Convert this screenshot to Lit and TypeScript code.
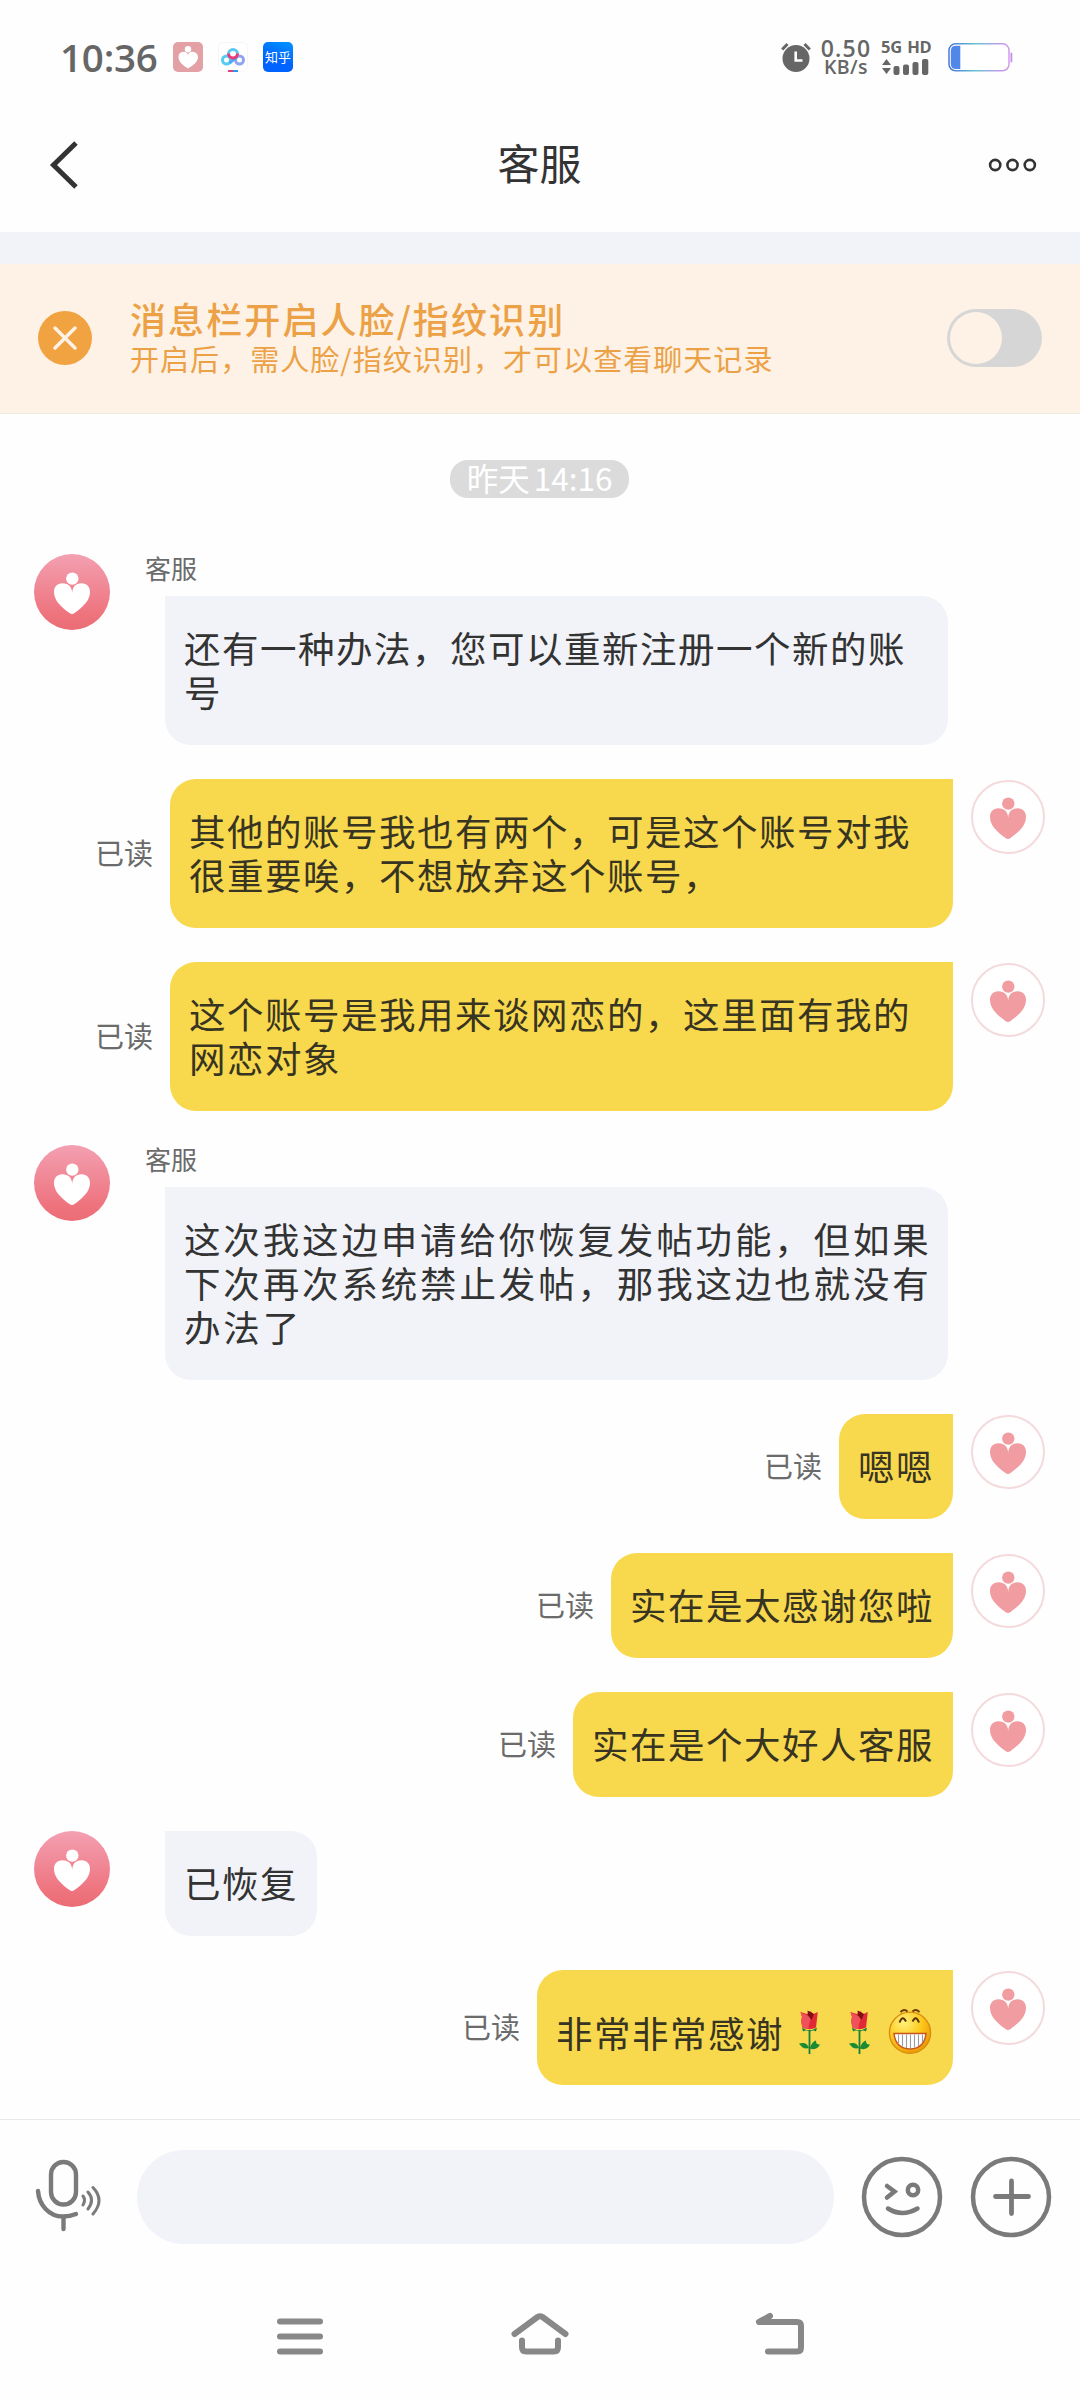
import { LitElement, html, css, svg } from "lit";
import { customElement, property } from "lit/decorators.js";
import { classMap } from "lit/directives/class-map.js";

type Message = {
  side: "in" | "out";
  name?: string;
  text: string;
  long?: boolean;
  spread?: boolean;
  emojis?: ("rose" | "grin")[];
};

const MESSAGES: Message[] = [
  { side: "in", name: "客服", long: true, text: "还有一种办法，您可以重新注册一个新的账号" },
  { side: "out", long: true, text: "其他的账号我也有两个，可是这个账号对我很重要唉，不想放弃这个账号，" },
  { side: "out", long: true, text: "这个账号是我用来谈网恋的，这里面有我的网恋对象" },
  {
    side: "in",
    name: "客服",
    long: true,
    spread: true,
    text: "这次我这边申请给你恢复发帖功能，但如果下次再次系统禁止发帖，那我这边也就没有办法了",
  },
  { side: "out", text: "嗯嗯" },
  { side: "out", text: "实在是太感谢您啦" },
  { side: "out", text: "实在是个大好人客服" },
  { side: "in", text: "已恢复" },
  { side: "out", text: "非常非常感谢", emojis: ["rose", "rose", "grin"] },
];

const heart = (fill: string) => svg`
  <circle cx="38.300" cy="24.600" r="6.200" fill=${fill}/>
  <path fill=${fill} d="M38.200 39C38 33 34.500 29.300 28.500 29.300C23 29.300 20 32.800 20 38C20 47 28 53.500 35.500 59Q38 61 40.500 59C48 53.500 56 47 56 38C56 32.800 53 29.300 47.500 29.300C41.800 29.300 38.400 33 38.200 39Z"/>`;

const rose = html`<svg class="emoji" width="50" height="48" viewBox="0 0 50 48">
  <path d="M25.500 22V46" stroke="#15803a" stroke-width="1.800" fill="none"/>
  <path d="M25 40C22.500 34 19 35 15 35.500C17.500 39.500 21 41.500 25 40ZM26 40.500C27 35.500 30 33 32 32.500C32 35.500 33 36.500 36 36.500C34 41 30 42 26 40.500Z" fill="#1a8a33"/>
  <path d="M18 19.500Q25 25 33 19.500L32 23.500Q29.500 21.500 26 23.500Q21.500 21.500 19 23.500Z" fill="#16803a"/>
  <path d="M16.500 4L23 6L26 3L29.500 6L33.800 4L32 19.500Q25.500 23 18.500 19.500Q16.500 13 18 9Z" fill="#e02a34"/>
  <path d="M16.500 4L24 8L29.500 7Q25 12 24.500 20.800Q21 21 18.500 19.500Q16.500 13 18 9Z" fill="#f0505a"/>
  <path d="M23.500 2.500L30 6L27.500 12L24 7.500Z" fill="#7e1016"/>
</svg>`;

const grin = html`<svg class="emoji" width="50" height="48" viewBox="0 0 50 48">
  <defs><radialGradient id="g" cx=".35" cy=".25" r=".8"><stop offset="0" stop-color="#fff27a"/><stop offset=".55" stop-color="#fdc81c"/><stop offset="1" stop-color="#e99605"/></radialGradient></defs>
  <circle cx="26" cy="24.800" r="20.600" fill="url(#g)" stroke="#d98b10" stroke-width="1.300"/>
  <path d="M16.500 4.200Q20 .200 23.500 3.500M28.500 3.500Q32 .200 35.500 4.200" stroke="#6b3b09" stroke-width="2" fill="none"/>
  <path d="M15.500 14.500Q18.500 6.500 22 13.500M28.500 13.500Q32 6.500 35 14.500" stroke="#5a3208" stroke-width="2" fill="none"/>
  <path d="M10 25.500H42Q40.500 40.500 26 41Q11.500 40.500 10 25.500Z" fill="#fff" stroke="#c8541c" stroke-width="1.500"/>
  <path d="M14.500 26.500V35M18.500 26.500V38.500M22.500 26.500V40M26.500 26.500V40.500M30.500 26.500V39.500M34.500 26.500V38M38.500 26.500V34" stroke="#9b9b9b" stroke-width="1.100"/>
</svg>`;

@customElement("chat-avatar")
class ChatAvatar extends LitElement {
  @property() kind = "in";
  static styles = css`
    :host { display: block; flex: none; width: 76px; height: 76px; }
    svg { display: block; }
  `;
  render() {
    return this.kind === "in"
      ? html`<svg width="76" height="76" viewBox="0 0 76 76">
          <defs><linearGradient id="a" x1="0" y1="0" x2="0" y2="1"><stop offset="0" stop-color="#f3a0b2"/><stop offset=".8" stop-color="#ee737d"/><stop offset="1" stop-color="#eb6c75"/></linearGradient></defs>
          <circle cx="38" cy="38" r="38" fill="url(#a)"/>${heart("#fff")}
        </svg>`
      : html`<svg width="76" height="76" viewBox="0 0 76 76">
          <circle cx="38" cy="38" r="36" fill="#fff" stroke="#f4dadc" stroke-width="2"/>
          ${heart("#f09ca1")}
        </svg>`;
  }
}

@customElement("chat-message")
class ChatMessage extends LitElement {
  @property({ attribute: false }) msg!: Message;
  static styles = css`
    :host { display: block; }
    .row { display: flex; align-items: flex-start; }
    .out { justify-content: flex-end; padding-right: 34px; }
    .in { padding-left: 34px; }
    .body { display: flex; flex-direction: column; align-items: flex-start; padding-left: 55px; }
    .name { font-size: 26px; line-height: 28px; height: 42px; color: #6b6b6b; margin-left: -20px; }
    .bubble { box-sizing: border-box; display: flex; align-items: center; padding: 30px 19px 31px; font-size: 36.500px; line-height: 44px; letter-spacing: 1.500px; white-space: nowrap; }
    .in .bubble { background: #f2f3f9; color: #333; border-radius: 0 26px 26px 26px; }
    .out .bubble { background: #f8d94e; color: #383422; border-radius: 26px 0 26px 26px; }
    .bubble.long { width: 783px; white-space: normal; }
    .bubble.spread { letter-spacing: 2.850px; padding-right: 8px; }
    .bubble.with-emoji { height: 115px; padding: 0 19px; }
    .with-emoji .words { padding-top: 10px; }
    .emoji { display: block; margin-top: 8px; }
    .read { align-self: center; margin-right: 17px; font-size: 29px; letter-spacing: 0; line-height: 34px; padding-bottom: 3px; color: #6b6b6b; }
    .gap { width: 17px; }
  `;
  render() {
    const m = this.msg;
    const bubble = html`<div class=${classMap({
      bubble: true,
      long: !!m.long,
      spread: !!m.spread,
      "with-emoji": !!m.emojis,
    })}><span class="words">${m.text}</span>${(m.emojis ?? []).map((e) => (e === "rose" ? rose : grin))}</div>`;
    return m.side === "in"
      ? html`<div class="row in">
          <chat-avatar kind="in"></chat-avatar>
          <div class="body">${m.name ? html`<div class="name">${m.name}</div>` : ""}${bubble}</div>
        </div>`
      : html`<div class="row out">
          <span class="read">已读</span>${bubble}<span class="gap"></span>
          <chat-avatar kind="out"></chat-avatar>
        </div>`;
  }
}

@customElement("app-root")
class AppRoot extends LitElement {
  static styles = css`
    :host { display: flex; flex-direction: column; width: 1080px; height: 2400px; background: #fefefe; overflow: hidden; font-family: "Noto Sans CJK SC", "Noto Sans", sans-serif; }
    svg { display: block; flex: none; }
    .status { display: flex; align-items: center; justify-content: space-between; height: 76px; padding: 38px 67px 0 60px; box-sizing: border-box; }
    .status-left, .status-right { display: flex; align-items: center; height: 38px; }
    .clock { width: 113px; font: 600 38.500px/38px "Open Sans", sans-serif; letter-spacing: -0.200px; color: #666; }
    .app { width: 30px; height: 30px; margin-right: 15px; border-radius: 5px; overflow: hidden; }
    .zhihu { display: flex; align-items: center; justify-content: center; background: linear-gradient(200deg, #0095ff, #0062ff 60%); color: #fff; font-size: 13px; line-height: 28px; font-weight: 400; }
    .speed { width: 54px; margin: 0 8px 0 8px; display: flex; flex-direction: column; align-items: center; color: #666; font-family: "Open Sans", sans-serif; font-weight: 600; }
    .rate { font-size: 23px; line-height: 19px; letter-spacing: 1.200px; }
    .unit { font-size: 19.500px; line-height: 18px; letter-spacing: 0.400px; }
    .net { width: 50px; display: flex; flex-direction: column; gap: 4px; }
    .net-label { font: 700 16.500px/13px "Open Sans", sans-serif; color: #666; white-space: nowrap; letter-spacing: -0.300px; word-spacing: 1.500px; }
    .battery { margin-left: 17px; }
    header { display: flex; align-items: center; justify-content: space-between; height: 156px; padding: 0 43px 0 49px; box-sizing: border-box; }
    .title { font-size: 42px; line-height: 50px; color: #333; margin-left: 11px; margin-top: 15px; }
    header svg { margin-top: 21px; }
    .band { height: 32px; background: #f2f3f9; }
    .banner { display: flex; align-items: center; height: 150px; box-sizing: border-box; padding: 0 38px 1px; background: #fdf2e5; border-bottom: 1px solid #ececdf; color: #eca146; }
    .texts { flex: 1; padding-left: 38px; margin-top: -2px; }
    .t1 { font-size: 36px; font-weight: 500; line-height: 40px; letter-spacing: 2.100px; }
    .t2 { font-size: 29px; line-height: 36px; letter-spacing: 1.050px; margin-top: 2px; }
    .toggle { width: 95px; height: 58px; border-radius: 29px; background: #d6d6d6; box-sizing: border-box; padding: 3px; }
    .knob { width: 52px; height: 52px; border-radius: 50%; background: #fdf2e5; }
    .when { align-self: center; margin: 46px 1px 0 0; width: 179px; height: 38px; border-radius: 18px; background: #dbdbdb; color: #fff; font-size: 31.500px; line-height: 35px; text-align: center; white-space: nowrap; word-spacing: -3px; }
    .list { display: flex; flex-direction: column; gap: 34px; padding-top: 56px; height: 1621px; box-sizing: border-box; }
    .composer { display: flex; align-items: center; height: 155px; border-top: 1px solid #e9e9e9; box-sizing: border-box; padding-left: 33px; }
    .field { width: 697px; height: 94px; border-radius: 47px; background: #f2f3f9; margin: 0 26px 0 32px; }
    .plus { margin-left: 25px; }
    .nav { display: flex; justify-content: center; padding-top: 33px; gap: 186px; }
  `;

  render() {
    return html`
      <div class="status">
        <div class="status-left">
          <span class="clock">10:36</span>
          <svg class="app" viewBox="0 0 30 30"><rect width="30" height="30" fill="#e3a0a5"/><circle cx="15" cy="7.200" r="3.200" fill="#fff"/><path fill="#fff" d="M15 13Q14 9.800 10.500 9.800Q5.500 10 5.500 15C5.500 20 10 23.500 15 26.500C20 23.500 25 20 25 15Q24.500 10 19.500 9.800Q16 9.800 15 13Z"/></svg>
          <svg class="app" viewBox="0 0 30 30">
            <rect x=".5" y=".5" width="29" height="29" rx="5" fill="#fff" stroke="#f5f5f5"/>
            <g fill="none" stroke-width="3"><circle cx="8.500" cy="18" r="4" stroke="#55cdf2"/><circle cx="21.500" cy="18" r="4" stroke="#8fa3ee"/><path d="M11.500 21L18.500 15" stroke="#4fa8f0"/><path d="M10.500 12A4.500 4.500 0 0 1 19.500 12" stroke="#5cc8ee"/><path d="M10.500 11.500A4.500 4.500 0 0 0 19.500 11.500" stroke="#ea3a78"/></g>
            <path d="M10 28h5v2h-5z" fill="#ea3a78"/><path d="M15 28h5v2h-5z" fill="#2b95ee"/>
          </svg>
          <span class="app zhihu">知乎</span>
        </div>
        <div class="status-right">
          <svg width="30" height="30" viewBox="0 0 30 30"><circle cx="15" cy="16.500" r="13.500" fill="#666"/><path d="M1.200 7.500L6.500 2M28.800 7.500L23.500 2" stroke="#666" stroke-width="3"/><path d="M14.700 9.500V18.500H21.500" stroke="#fff" stroke-width="2.600" fill="none"/></svg>
          <div class="speed"><span class="rate">0.50</span><span class="unit">KB/s</span></div>
          <div class="net">
            <span class="net-label">5G HD</span>
            <svg width="48" height="18" viewBox="0 0 48 18" fill="#666"><path d="M5.500 2L10 8H1ZM5.500 17L10 11H1Z"/><rect x="12.500" y="9" width="6" height="9" rx="2"/><rect x="22" y="7.500" width="6" height="10.500" rx="2"/><rect x="31.500" y="5" width="6" height="13" rx="2"/><rect x="41" y="2" width="6.300" height="16" rx="2"/></svg>
          </div>
          <svg class="battery" width="65" height="30" viewBox="0 0 65 30"><defs><linearGradient id="b"><stop offset="0" stop-color="#4a78d8"/><stop offset=".45" stop-color="#67c3cf"/><stop offset=".8" stop-color="#b9a0ea"/><stop offset="1" stop-color="#d29bea"/></linearGradient></defs><rect x="1" y="1.800" width="60" height="27" rx="6.500" fill="#fff" stroke="url(#b)" stroke-width="1.500"/><path d="M12.300 3.700H8Q2.800 3.700 2.800 9V21.500Q2.800 27 8 27H12.300Z" fill="#5087e8"/><rect x="62.500" y="10.500" width="1.800" height="10" rx=".9" fill="#c98cf0"/></svg>
        </div>
      </div>
      <header>
        <svg width="32" height="50" viewBox="0 0 32 50"><path d="M27 3L4.500 25L27 47" fill="none" stroke="#333" stroke-width="5"/></svg>
        <span class="title">客服</span>
        <svg width="50" height="16" viewBox="0 0 50 16" fill="none" stroke="#333" stroke-width="2.600"><circle cx="8.200" cy="8" r="5.100"/><circle cx="25.500" cy="8" r="5.100"/><circle cx="42.800" cy="8" r="5.100"/></svg>
      </header>
      <div class="band"></div>
      <div class="banner">
        <svg width="54" height="54" viewBox="0 0 54 54"><circle cx="27" cy="27" r="27" fill="#f1a241"/><path d="M17 17L37 37M37 17L17 37" stroke="#fdf2e5" stroke-width="3.500" stroke-linecap="round"/></svg>
        <div class="texts"><div class="t1">消息栏开启人脸/指纹识别</div><div class="t2">开启后，需人脸/指纹识别，才可以查看聊天记录</div></div>
        <div class="toggle"><div class="knob"></div></div>
      </div>
      <div class="when">昨天 14:16</div>
      <div class="list">${MESSAGES.map((m) => html`<chat-message .msg=${m}></chat-message>`)}</div>
      <div class="composer">
        <svg width="72" height="80" viewBox="0 0 72 80" fill="none" stroke="#7a7a7a" stroke-linecap="round"><g stroke-width="4.400"><rect x="18" y="5" width="25" height="42.500" rx="12.500"/><path d="M5 34C6 48 16 59.500 30 59.500Q37 59.500 43 57M30.500 60V72"/></g><g stroke-width="3"><path d="M50 39Q53 43 50 48M55 35Q62 43 55 52M60 30.500Q72 43 60 57"/></g></svg>
        <div class="field"></div>
        <svg width="84" height="84" viewBox="0 0 84 84" fill="none" stroke="#7a7a7a" stroke-width="4.500" stroke-linecap="round"><circle cx="42" cy="42" r="38"/><path d="M27 31L34.500 36.500L27 42.500M28 53.500Q42 62.500 57.500 53.500"/><circle cx="53" cy="35" r="5.200"/></svg>
        <svg width="84" height="84" viewBox="0 0 84 84" fill="none" stroke="#7a7a7a" stroke-width="4.500" stroke-linecap="round" class="plus"><circle cx="42" cy="42" r="38"/><path d="M26.500 41.500H59.500M42.500 26V58.500" stroke-width="4.800"/></svg>
      </div>
      <div class="nav">
        <svg width="54" height="54" viewBox="0 0 54 54" stroke="#888" stroke-width="6" stroke-linecap="round"><path d="M7 14.500H47M7 29.500H47M7 44.500H47"/></svg>
        <svg width="54" height="54" viewBox="0 0 54 54" overflow="visible" fill="none" stroke="#888" stroke-width="6" stroke-linecap="round" stroke-linejoin="round"><path d="M1.500 27L24.500 10Q27 8.500 29.500 10L52.500 27M9 33.500V40Q9 44.500 13 44.500H41Q45 44.500 45 40V33.500"/></svg>
        <svg width="54" height="54" viewBox="0 0 54 54" fill="none" stroke="#888" stroke-width="6" stroke-linecap="round" stroke-linejoin="round"><path d="M17 9L6 15H44Q48 15 48 19V40.500Q48 44.500 44 44.500H15"/></svg>
      </div>
    `;
  }
}
